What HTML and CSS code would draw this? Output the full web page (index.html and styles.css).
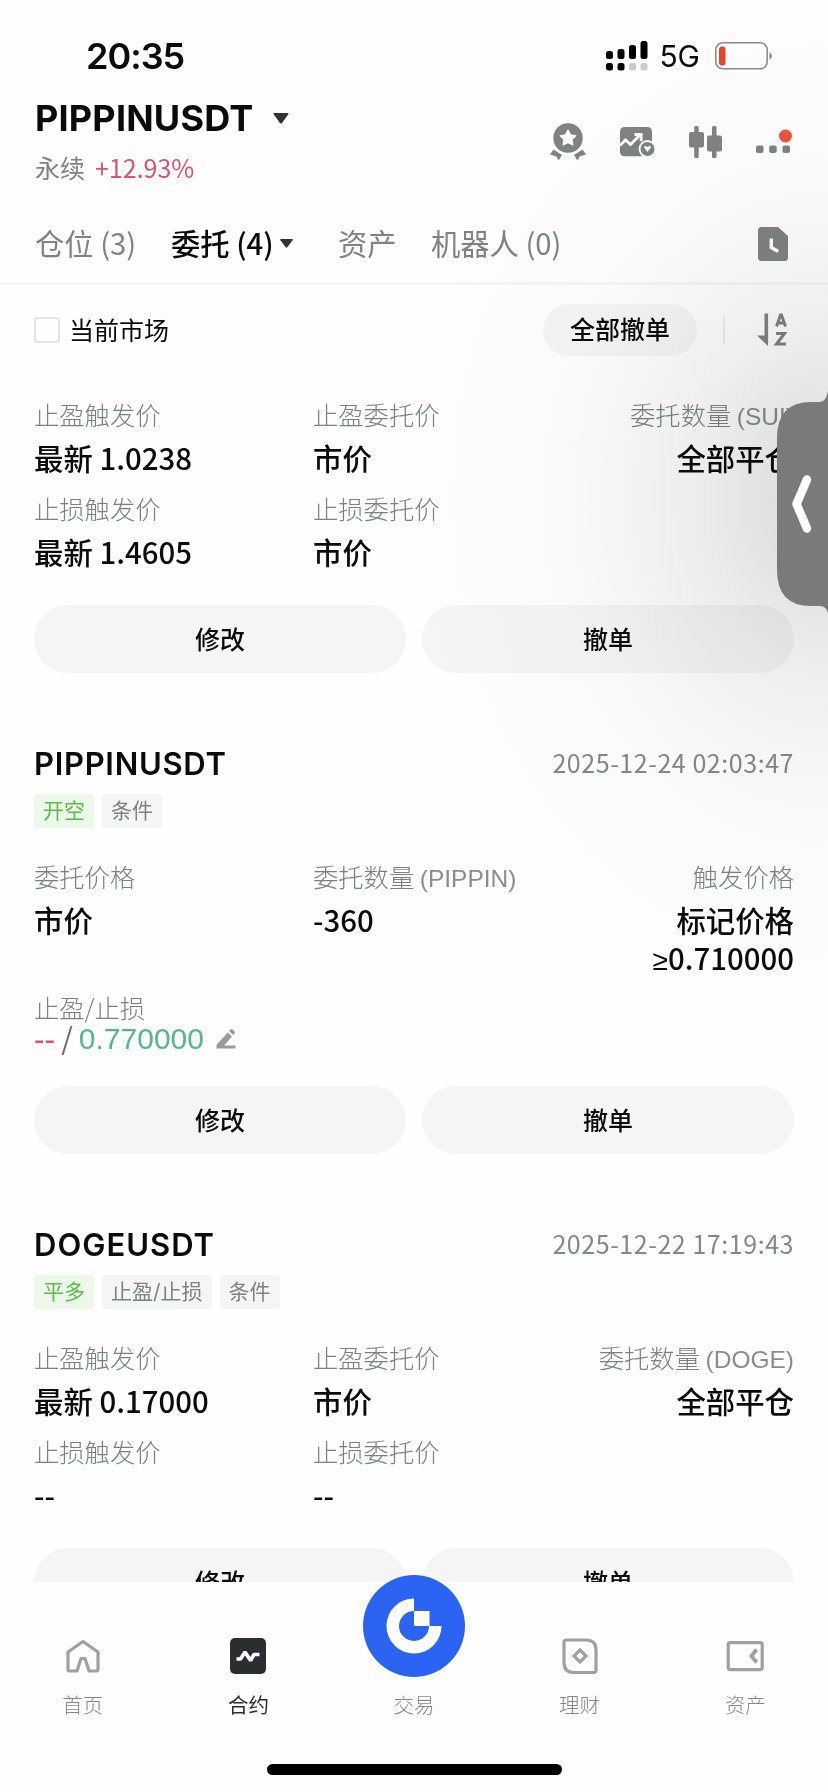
FILE: index.html
```html
<!DOCTYPE html>
<html lang="zh-CN">
<head>
<meta charset="utf-8">
<title>PIPPINUSDT</title>
<link rel="stylesheet" href="styles.css">
</head>
<body>
<div class="screen">
  <div class="status">
    <span class="clock">20:35</span>
    <div class="status-right">
      <svg class="signal" width="42" height="30" viewBox="0 0 42 30">
        <g fill="#000"><rect x="0" y="10" width="7" height="8" rx="2.5"/><rect x="11.500" y="8" width="7" height="10" rx="2.500"/><rect x="23" y="4" width="7" height="14" rx="2.500"/><rect x="34.500" y="0" width="7" height="18" rx="2.500"/><rect x="0" y="22" width="7" height="7.500" rx="2.500"/><rect x="11.500" y="22" width="7" height="7.500" rx="2.500"/></g>
        <g fill="#ccc"><rect x="23" y="22" width="7" height="7.500" rx="2.500"/><rect x="34.500" y="22" width="7" height="7.500" rx="2.500"/></g>
      </svg>
      <span class="network">5G</span>
      <svg class="battery" width="58" height="28" viewBox="0 0 58 28">
        <rect x="0.800" y="0.800" width="51.400" height="26" rx="7" fill="none" stroke="#8c8c8f" stroke-width="1.600"/>
        <rect x="4" y="4.500" width="6.500" height="19" rx="3" fill="#e5432f"/>
        <path d="M54.500 10a4.500 4.500 0 0 1 0 8z" fill="#8c8c8f"/>
      </svg>
    </div>
  </div>

  <header class="header">
    <div class="pair">
      <div class="pair-title"><h1>PIPPINUSDT</h1><svg width="16" height="11" viewBox="0 0 16 11"><path d="M1.500 0h13q1.500.3.700 1.600L9 10q-1 1.200-2 0L.8 1.600Q0 .3 1.500 0z" fill="#303236"/></svg></div>
      <div class="pair-sub">永续<span class="change">+12.93%</span></div>
    </div>
    <div class="tools">
      <svg width="36" height="38" viewBox="0 0 36 38" fill="#7f8284">
        <circle cx="18" cy="15" r="14.700"/>
        <path fill="#fff" stroke="#fff" stroke-width="1" stroke-linejoin="round" d="m18 6.800 2.600 5 5.500.9-3.900 4 .8 5.500-5-2.500-5 2.500.8-5.500-3.900-4 5.500-.9z"/>
        <path d="M3.500 26.500 12 32 8.500 37.500 6.500 33.500 0 31.500zM32.500 26.500 24 32 27.500 37.500 29.500 33.500 36 31.500z"/>
      </svg>
      <svg width="35" height="30" viewBox="0 0 35 30">
        <rect x="0" y="0" width="32" height="29.300" rx="4.500" fill="#7f8284"/>
        <path d="M0 18.500 5.500 13l5 4.500L20 8M14.500 7.500h6.700v6.700" fill="none" stroke="#fff" stroke-width="2.800"/>
        <circle cx="27.500" cy="22" r="8.900" fill="#fff"/><circle cx="27.500" cy="22" r="7" fill="#7f8284"/>
        <path d="M24 20.500q0-1.500 1.800-1.500l1.700 1 1.700-1q1.800 0 1.800 1.500l-3.500 4.500z" fill="#fff"/>
      </svg>
      <svg width="33" height="33" viewBox="0 0 33 33" fill="#7f8284">
        <rect x="5.200" y="0" width="4.500" height="32" rx="1.500"/><rect x="0" y="6" width="15" height="15.500" rx="2"/>
        <rect x="23" y="0" width="4.500" height="32" rx="1.500"/><rect x="18" y="9.500" width="15" height="16" rx="2"/>
      </svg>
      <svg width="36" height="26" viewBox="0 0 36 26" fill="#7f8284">
        <rect x="0" y="16.500" width="7.500" height="7.500" rx="2"/><rect x="13.200" y="16.500" width="7.500" height="7.500" rx="2"/><rect x="26.500" y="16.500" width="7.500" height="7.500" rx="2"/>
        <circle cx="29.500" cy="7" r="6.500" fill="#ea5545"/>
      </svg>
    </div>
  </header>

  <nav class="tabs">
    <span class="tab tab-1">仓位 (3)</span>
    <span class="tab tab-2 active">委托 (4)<svg width="13" height="9" viewBox="0 0 13 9"><path d="M1 0h11q1.300.3.600 1.300L7.300 8.300q-.8.900-1.600 0L.4 1.300Q-.3.300 1 0z" fill="#303236"/></svg></span>
    <span class="tab tab-3">资产</span>
    <span class="tab">机器人 (0)</span>
    <svg class="history" width="30" height="34" viewBox="0 0 30 34">
      <path d="M3.500 0H20l10 9v21.500q0 3.500-3.500 3.500h-23Q0 34 0 30.500v-27Q0 0 3.500 0z" fill="#7f8284"/>
      <path d="M13.300 11.500v9l7 4" fill="none" stroke="#fff" stroke-width="3.400"/>
    </svg>
  </nav>

  <div class="filters">
    <span class="checkbox"></span><span class="filter-label">当前市场</span>
    <button class="pill">全部撤单</button>
    <span class="separator"></span>
    <svg class="sort" width="31" height="34" viewBox="0 0 31 34" fill="none" stroke="#7f8284">
      <path d="M9.300 0.500V29" stroke-width="3.600"/><path d="M0 22.500h11V33z" fill="#7f8284" stroke="none"/>
      <path d="m19.500 13.500 4-11.500h1l4 11.500M20.500 10h7" stroke-width="3"/>
      <path d="M19 20.500h8.500l-8 10.500H29" stroke-width="3"/>
    </svg>
  </div>

  <main class="orders">
    <section class="order first">
      <div class="row">
        <div><div class="label">止盈触发价</div><div class="value">最新 1.0238</div></div>
        <div><div class="label">止盈委托价</div><div class="value">市价</div></div>
        <div class="end"><div class="label">委托数量 <span class="unit">(SUI)</span></div><div class="value">全部平仓</div></div>
      </div>
      <div class="row">
        <div><div class="label">止损触发价</div><div class="value">最新 1.4605</div></div>
        <div><div class="label">止损委托价</div><div class="value">市价</div></div>
      </div>
      <div class="actions"><button>修改</button><button class="tinted">撤单</button></div>
    </section>

    <section class="order">
      <div class="order-head"><h2>PIPPINUSDT</h2><time>2025-12-24 02:03:47</time></div>
      <div class="tags"><span class="tag green">开空</span><span class="tag">条件</span></div>
      <div class="row">
        <div><div class="label">委托价格</div><div class="value">市价</div></div>
        <div><div class="label">委托数量 <span class="unit">(PIPPIN)</span></div><div class="value">-360</div></div>
        <div class="end"><div class="label">触发价格</div><div class="value">标记价格<br><span class="geq">≥</span>0.710000</div></div>
      </div>
      <div class="stops">
        <div class="label">止盈/止损</div>
        <div class="stop-value"><span class="red">--</span><span class="slash">/</span><span class="teal">0.770000</span>
          <svg width="20" height="20" viewBox="0 0 20 20" fill="#999c9e"><path d="m11.800 3.500 4.200 4-7.800 9H19.500v3H.5v-3.800zM13 2l2-1.700q.6-.5 1.200 0l2.500 2.500q.5.600 0 1.300L17 6z"/></svg>
        </div>
      </div>
      <div class="actions close"><button>修改</button><button>撤单</button></div>
    </section>

    <section class="order">
      <div class="order-head"><h2 class="spaced">DOGEUSDT</h2><time>2025-12-22 17:19:43</time></div>
      <div class="tags"><span class="tag green">平多</span><span class="tag">止盈/止损</span><span class="tag">条件</span></div>
      <div class="row">
        <div><div class="label">止盈触发价</div><div class="value">最新 0.17000</div></div>
        <div><div class="label">止盈委托价</div><div class="value">市价</div></div>
        <div class="end"><div class="label">委托数量 <span class="unit">(DOGE)</span></div><div class="value">全部平仓</div></div>
      </div>
      <div class="row">
        <div><div class="label">止损触发价</div><div class="value">--</div></div>
        <div><div class="label">止损委托价</div><div class="value">--</div></div>
      </div>
      <div class="actions"><button>修改</button><button>撤单</button></div>
    </section>
  </main>

  <footer class="bottom">
    <div class="bottom-nav">
      <div class="nav-item">
        <svg width="36" height="36" viewBox="0 0 36 36" fill="none" stroke="#a0a0a1" stroke-width="3.200" stroke-linejoin="round"><path d="M3 14 18 3.500 33 14v17.500q0 1.500-1.500 1.500H24l-4-12.500h-4L12 33H4.500Q3 33 3 31.500z"/></svg>
        <span>首页</span>
      </div>
      <div class="nav-item selected">
        <svg width="36" height="36" viewBox="0 0 36 36"><rect width="36" height="36" rx="5" fill="#2c2d31"/><path d="M6.500 21h4l4.500-7 5.500 8.500 3.500-6h5.500" fill="none" stroke="#fff" stroke-width="3.600" stroke-linejoin="bevel"/></svg>
        <span>合约</span>
      </div>
      <div class="nav-item"><i class="icon-space"></i><span>交易</span></div>
      <div class="nav-item">
        <svg width="36" height="36" viewBox="0 0 36 36" fill="none" stroke="#a0a0a1" stroke-width="3.200"><path d="M4.500 2H24q10 0 10 10v20q0 2.500-2.500 2.500H12q-10 0-10-10v-20Q2 2 4.500 2z"/><path d="m18 12 6 6-6 6-6-6z"/></svg>
        <span>理财</span>
      </div>
      <div class="nav-item">
        <svg width="38" height="36" viewBox="0 0 38 36" fill="none" stroke="#a0a0a1" stroke-width="3.200"><rect x="2.200" y="4.600" width="34" height="27" rx="2"/><path d="M30.500 11.500 25.500 18l5 6.500" stroke-width="3.800"/></svg>
        <span>资产</span>
      </div>
    </div>
    <svg class="trade" width="102" height="102" viewBox="0 0 102 102">
      <circle cx="51" cy="51" r="51" fill="#2b64f3"/>
      <path d="M51 23.500A27.500 27.500 0 1 0 78.500 51H66A15 15 0 1 1 51 36z" fill="#fff"/><rect x="51" y="36" width="15.500" height="15" fill="#fff"/>
    </svg>
    <div class="home-bar"></div>
  </footer>

  <div class="haze"></div>
  <svg class="handle" width="51" height="226" viewBox="0 0 51 226">
    <path d="M51 0Q49 11 43 11H34Q0 11 0 47V179Q0 215 34 215H43Q49 215 51 222z" fill="#7a7a7a"/>
    <path d="M30 88.500 19.500 113 30 137.500" fill="none" stroke="#fff" stroke-width="8.500" stroke-linecap="round" stroke-linejoin="round"/>
  </svg>
</div>
</body>
</html>
```
FILE: styles.css
```css
* { box-sizing: border-box; margin: 0; padding: 0; }
body { background: #fff; font-family: Inter, "Noto Sans CJK SC", sans-serif; color: #0b0b0c; }
svg { display: block; flex: none; }
button { border: 0; font: inherit; color: inherit; }
.screen { position: relative; width: 828px; height: 1792px; overflow: hidden; display: flex; flex-direction: column; background: #fefefe; }

.status { height: 88px; padding: 24px 55px 0 86px; display: flex; justify-content: space-between; align-items: center; flex: none; }
.clock { font-size: 36px; font-weight: 600; line-height: 64px; letter-spacing: -1px; }
.status-right { display: flex; align-items: center; }
.network { font-size: 30px; margin: 0 15px 0 11px; line-height: 40px; }

.header { height: 102px; padding: 10px 36px 0 35px; display: flex; justify-content: space-between; flex: none; }
.pair-title { display: flex; align-items: center; gap: 20px; height: 40px; }
.pair-title h1 { font-size: 36px; font-weight: 700; line-height: 40px; letter-spacing: 0.2px; }
.pair-sub { margin-top: 14px; font-family: "Noto Sans CJK SC", sans-serif; font-size: 25px; line-height: 30px; color: #7f8285; display: flex; gap: 10px; }
.change { color: #d4566f; }
.tools { display: flex; align-items: center; gap: 34px; height: 88px; }

.tabs { height: 95px; padding: 11px 40px 0 35px; border-bottom: 3px solid #f6f6f6; display: flex; align-items: center; font-family: "Noto Sans CJK SC", sans-serif; font-size: 29.300px; color: #808386; flex: none; }
.tab { display: flex; align-items: center; white-space: pre; }
.tab-1 { width: 136px; }
.tab-2 { width: 167px; gap: 6px; }
.tab-3 { width: 93px; }
.tab.active { color: #0b0b0c; font-weight: 500; }
.tab svg { margin-top: 3px; }
.history { margin-left: auto; margin-top: 4px; }

.filters { height: 90px; padding: 0 40px 0 34px; display: flex; align-items: center; font-size: 25px; flex: none; }
.checkbox { width: 26px; height: 26px; border: 2px solid #e4e4e4; border-radius: 3px; }
.filter-label { margin-left: 9px; padding-bottom: 3px; }
.pill { width: 154px; height: 52px; margin-left: auto; padding-bottom: 4px; border-radius: 26px; background: #f4f5f7; font-weight: 500; }
.separator { width: 2px; height: 27px; margin: 0 32px 0 26px; background: #ececec; }

.orders { flex: 1; min-height: 0; overflow: hidden; padding: 0 34px; }
.order { padding-top: 70px; }
.order.first { padding-top: 21px; }
.order-head { display: flex; justify-content: space-between; align-items: center; height: 40px; }
.order-head h2 { font-size: 31px; font-weight: 600; letter-spacing: 0.700px; }
.order-head h2.spaced { letter-spacing: 1px; }
.order-head time { font-family: "Noto Sans CJK SC", sans-serif; font-size: 25px; line-height: 36px; margin-bottom: 3px; letter-spacing: 0.550px; color: #85888b; }
.tags { display: flex; gap: 8px; margin: 11px 0 30px; }
.tag { height: 34px; padding: 0 9px; line-height: 34px; font-size: 21px; color: #7f8285; background: #f5f5f6; border-radius: 3px; }
.tag.green { color: #62b94c; background: #ecf8ea; }
.row { display: grid; grid-template-columns: 279px 279px 1fr; font-family: "Noto Sans CJK SC", sans-serif; }
.row + .row { margin-top: 14px; }
.row .end { text-align: right; }
.label { font-size: 25.300px; line-height: 36px; color: #7d8083; font-weight: 300; white-space: nowrap; }
.unit { font-family: "Liberation Sans", sans-serif; font-size: 24.500px; line-height: 1; color: #8a8d90; }
.value { margin-top: 6px; font-size: 29.400px; line-height: 38px; font-weight: 500; white-space: nowrap; }
.geq { font-family: "Liberation Sans", sans-serif; font-size: 28px; line-height: 1; }
.stops { margin-top: 17px; font-family: "Noto Sans CJK SC", sans-serif; }
.stops .label { line-height: 28px; }
.stop-value { display: flex; align-items: center; height: 34px; font-size: 29.700px; line-height: 34px; }
.red { color: #d4566f; font-weight: 500; }
.slash { margin: 0 6px; color: #6a6d70; }
.teal { font-family: "Liberation Sans", sans-serif; font-size: 30px; color: #57b78b; padding-top: 2px; }
.stop-value svg { margin: 2px 0 0 12px; }
.actions { display: grid; grid-template-columns: 1fr 1fr; gap: 16px; margin-top: 35px; }
.actions.close { margin-top: 31px; }
.actions button { height: 68px; padding-bottom: 3px; border-radius: 34px; background: #f5f5f5; font-size: 25px; font-weight: 500; }
.actions .tinted { background: #f3f5f7; }

.bottom { position: relative; height: 210px; background: #fefefe; flex: none; }
.bottom-nav { display: grid; grid-template-columns: repeat(5, 1fr); padding-top: 56px; }
.nav-item { display: flex; flex-direction: column; align-items: center; gap: 17px; font-size: 20.500px; line-height: 30px; color: #85888b; font-weight: 300; }
.nav-item.selected { color: #2c2d31; font-weight: 400; }
.icon-space { height: 36px; }
.trade { position: absolute; left: 363px; top: -7px; }
.home-bar { position: absolute; left: 267px; bottom: 17px; width: 295px; height: 11px; border-radius: 6px; background: #000; }

.haze { position: absolute; right: 0; top: 0; width: 430px; height: 1040px; pointer-events: none; mix-blend-mode: multiply; background: radial-gradient(ellipse 420px 510px at 100% 500px, #dadada 0%, #e2e2e2 14%, #eeeeee 32%, #f6f6f6 50%, #fbfbfb 66%, #fdfdfd 84%, #fff 100%); }
.handle { position: absolute; right: 0; top: 391px; }
```
